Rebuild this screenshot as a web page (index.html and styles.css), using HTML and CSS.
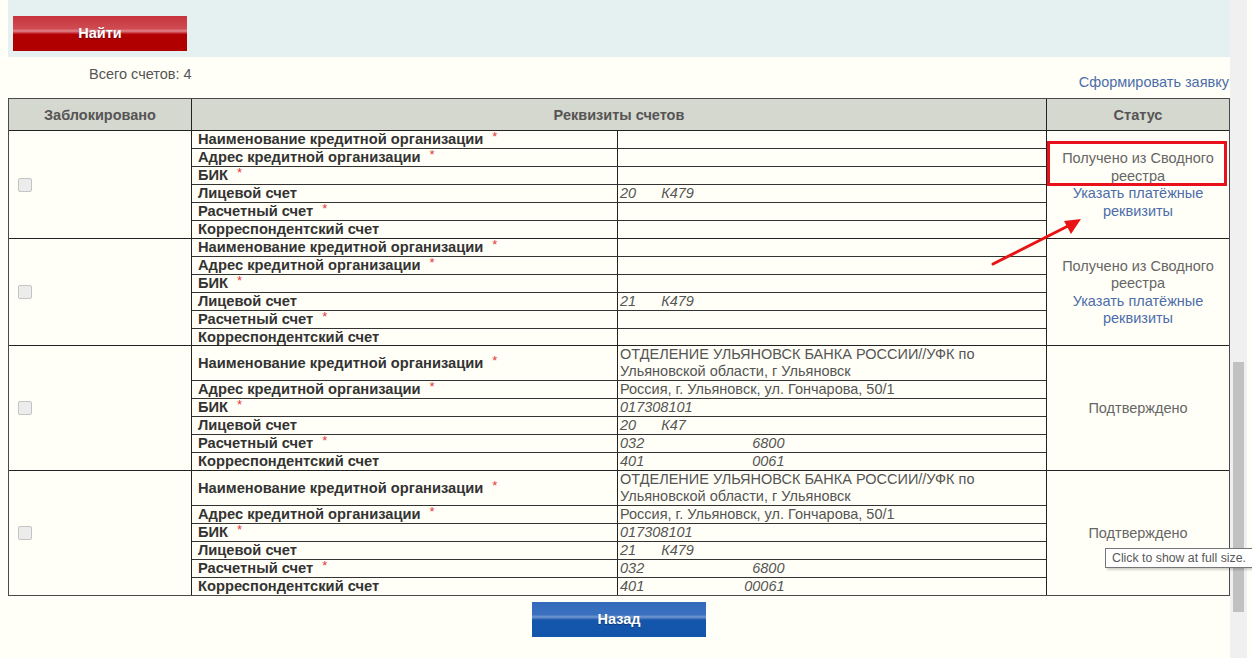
FILE: index.html
```html
<!DOCTYPE html>
<html lang="ru">
<head>
<meta charset="utf-8">
<title>Реквизиты счетов</title>
<link rel="stylesheet" href="styles.css">
</head>
<body>
<div class="screen">
  <main class="page">
    <div class="search-panel">
      <button class="btn btn-red" type="button">Найти</button>
    </div>
    <div class="summary">
      <span class="total">Всего счетов: 4</span>
      <a class="link request" href="#">Сформировать заявку</a>
    </div>

    <div class="tbl">
      <div class="thead">
        <div class="th">Заблокировано</div>
        <div class="th">Реквизиты счетов</div>
        <div class="th">Статус</div>
      </div>

      <div class="block">
        <div class="cb-cell"><span class="cb"></span></div>
        <div class="details">
          <div class="row"><div class="lbl">Наименование кредитной организации<span class="req">*</span></div><div class="val"></div></div>
          <div class="row"><div class="lbl">Адрес кредитной организации<span class="req">*</span></div><div class="val"></div></div>
          <div class="row"><div class="lbl">БИК<span class="req">*</span></div><div class="val"></div></div>
          <div class="row"><div class="lbl">Лицевой счет</div><div class="val it">20<span class="g1">К479</span></div></div>
          <div class="row"><div class="lbl">Расчетный счет<span class="req">*</span></div><div class="val"></div></div>
          <div class="row"><div class="lbl">Корреспондентский счет</div><div class="val"></div></div>
        </div>
        <div class="status">
          <span class="st">Получено из Сводного реестра</span>
          <a class="link" href="#">Указать платёжные реквизиты</a>
        </div>
      </div>

      <div class="block short">
        <div class="cb-cell"><span class="cb"></span></div>
        <div class="details">
          <div class="row"><div class="lbl">Наименование кредитной организации<span class="req">*</span></div><div class="val"></div></div>
          <div class="row"><div class="lbl">Адрес кредитной организации<span class="req">*</span></div><div class="val"></div></div>
          <div class="row"><div class="lbl">БИК<span class="req">*</span></div><div class="val"></div></div>
          <div class="row"><div class="lbl">Лицевой счет</div><div class="val it">21<span class="g1">К479</span></div></div>
          <div class="row"><div class="lbl">Расчетный счет<span class="req">*</span></div><div class="val"></div></div>
          <div class="row"><div class="lbl">Корреспондентский счет</div><div class="val"></div></div>
        </div>
        <div class="status">
          <span class="st">Получено из Сводного реестра</span>
          <a class="link" href="#">Указать платёжные реквизиты</a>
        </div>
      </div>

      <div class="block">
        <div class="cb-cell"><span class="cb"></span></div>
        <div class="details">
          <div class="row tall"><div class="lbl">Наименование кредитной организации<span class="req">*</span></div><div class="val">ОТДЕЛЕНИЕ УЛЬЯНОВСК БАНКА РОССИИ//УФК по Ульяновской области, г Ульяновск</div></div>
          <div class="row"><div class="lbl">Адрес кредитной организации<span class="req">*</span></div><div class="val">Россия, г. Ульяновск, ул. Гончарова, 50/1</div></div>
          <div class="row"><div class="lbl">БИК<span class="req">*</span></div><div class="val it">017308101</div></div>
          <div class="row"><div class="lbl">Лицевой счет</div><div class="val it">20<span class="g1">К47</span></div></div>
          <div class="row"><div class="lbl">Расчетный счет<span class="req">*</span></div><div class="val it">032<span class="g2">6800</span></div></div>
          <div class="row"><div class="lbl">Корреспондентский счет</div><div class="val it">401<span class="g2">0061</span></div></div>
        </div>
        <div class="status">
          <span class="st">Подтверждено</span>
        </div>
      </div>

      <div class="block">
        <div class="cb-cell"><span class="cb"></span></div>
        <div class="details">
          <div class="row tall"><div class="lbl">Наименование кредитной организации<span class="req">*</span></div><div class="val">ОТДЕЛЕНИЕ УЛЬЯНОВСК БАНКА РОССИИ//УФК по Ульяновской области, г Ульяновск</div></div>
          <div class="row"><div class="lbl">Адрес кредитной организации<span class="req">*</span></div><div class="val">Россия, г. Ульяновск, ул. Гончарова, 50/1</div></div>
          <div class="row"><div class="lbl">БИК<span class="req">*</span></div><div class="val it">017308101</div></div>
          <div class="row"><div class="lbl">Лицевой счет</div><div class="val it">21<span class="g1">К479</span></div></div>
          <div class="row"><div class="lbl">Расчетный счет<span class="req">*</span></div><div class="val it">032<span class="g2">6800</span></div></div>
          <div class="row"><div class="lbl">Корреспондентский счет</div><div class="val it">401<span class="g3">00061</span></div></div>
        </div>
        <div class="status">
          <span class="st">Подтверждено</span>
        </div>
      </div>
    </div>

    <div class="actions">
      <button class="btn btn-blue" type="button">Назад</button>
    </div>
  </main>

  <div class="scrollbar"><div class="thumb"></div></div>

  <div class="mark-box"></div>
  <svg class="arrow" width="100" height="52" viewBox="0 0 100 52">
    <line x1="3" y1="48" x2="80" y2="9" stroke="#e81414" stroke-width="3" stroke-linecap="round"/>
    <polygon points="91,3 74,5 81,18" fill="#e81414"/>
  </svg>
  <div class="tooltip">Click to show at full size.</div>
</div>
</body>
</html>
```

FILE: styles.css
```css
html, body {
  margin: 0;
  padding: 0;
  overflow: hidden;
  background: #fffff7;
}

.screen {
  position: relative;
  display: flex;
  width: 1252px;
  height: 658px;
  font-family: "Liberation Sans", Arial, sans-serif;
  font-size: 14.5px;
  color: #555;
}

.page {
  width: 1230px;
  padding-left: 8px;
  box-sizing: border-box;
  background: #fffff7;
}

.search-panel {
  height: 57px;
  width: 1222px;
  background: #e5f1f1;
  padding: 16px 0 0 5px;
  box-sizing: border-box;
}

.btn {
  display: block;
  width: 174px;
  height: 35px;
  border: 0;
  padding: 0 0 2px;
  font-family: "Liberation Sans", Arial, sans-serif;
  font-size: 14.5px;
  font-weight: bold;
  color: #fff;
  text-shadow: 0 1px 1px rgba(0, 0, 0, 0.35);
  cursor: pointer;
}

.btn-red {
  background: linear-gradient(#c8343c 0%, #cf4b52 36%, #e2858a 43%, #c32a31 49%, #b20000 53%, #b00000 100%);
}

.btn-blue {
  background: linear-gradient(#3369b9 0%, #3a71bf 36%, #7399d2 43%, #2b62b3 49%, #1556ad 53%, #1455ac 100%);
}

.summary {
  height: 41px;
  width: 1222px;
  display: flex;
  justify-content: space-between;
}

.total {
  margin: 9px 0 0 81px;
  line-height: 17px;
}

.link {
  color: #4c6daa;
  text-decoration: none;
}

.request {
  margin-top: 17px;
  margin-right: 1px;
  line-height: 17px;
  height: 17px;
}

.tbl {
  width: 1222px;
  border: 1px solid #4a4a4a;
  box-sizing: border-box;
}

.thead {
  display: grid;
  grid-template-columns: 183px 855px 182px;
  height: 32px;
  background: #d5d8cf;
  border-bottom: 1px solid #222;
  box-sizing: border-box;
}

.th {
  display: flex;
  align-items: center;
  justify-content: center;
  font-weight: bold;
  color: #555;
}

.th:nth-child(1),
.th:nth-child(2) {
  border-right: 1px solid #222;
}

.block {
  display: grid;
  grid-template-columns: 183px 855px 182px;
  border-bottom: 1px solid #222;
}

.block:last-child {
  border-bottom: 0;
}

.cb-cell {
  border-right: 1px solid #222;
  display: flex;
  align-items: center;
  padding-left: 9px;
}

.cb {
  width: 12px;
  height: 12px;
  border: 1px solid #c4c4c4;
  border-radius: 2px;
  background: #ececec;
}

.details {
  border-right: 1px solid #222;
}

.row {
  display: flex;
  height: 18px;
  border-bottom: 1px solid #333;
  box-sizing: border-box;
  line-height: 17px;
}

.row:last-child {
  border-bottom: 0;
  height: 17px;
}

.block.short .row:last-child {
  height: 16px;
}

.row.tall {
  height: 35px;
}

.lbl {
  width: 426px;
  flex: none;
  border-right: 1px solid #222;
  padding-left: 6px;
  box-sizing: border-box;
  font-weight: bold;
  font-size: 14.7px;
  color: #333;
  white-space: nowrap;
}

.row.tall .lbl {
  line-height: 34px;
}

.req {
  color: #e23a3a;
  font-weight: normal;
  font-size: 13px;
  margin-left: 9px;
  line-height: 0;
  vertical-align: 3px;
}

.val {
  flex: 1;
  padding-left: 2px;
  color: #555;
  white-space: nowrap;
  overflow: hidden;
}

.row.tall .val {
  white-space: normal;
  line-height: 17px;
}

.it {
  font-style: italic;
}

.g1 { margin-left: 25px; }
.g2 { margin-left: 108px; }
.g3 { margin-left: 100px; }

.status {
  display: flex;
  flex-direction: column;
  align-items: center;
  justify-content: center;
  text-align: center;
  line-height: 17.5px;
  padding: 1px 10px 0;
}

.st {
  color: #666;
}

.actions {
  width: 1222px;
  display: flex;
  justify-content: center;
  padding-top: 6px;
}

.scrollbar {
  width: 22px;
  height: 658px;
  background: #f0f0f0;
  border-right: 5px solid #fffff7;
  box-sizing: border-box;
  padding: 362px 0 0 3px;
}

.thumb {
  width: 11px;
  height: 250px;
  background: #c1c1c1;
}

.mark-box {
  position: absolute;
  left: 1047px;
  top: 141px;
  width: 180px;
  height: 45px;
  border: 3px solid #e8101a;
  box-sizing: border-box;
}

.arrow {
  position: absolute;
  left: 990px;
  top: 216px;
}

.tooltip {
  position: absolute;
  left: 1105px;
  top: 548px;
  height: 20px;
  padding: 0 8px 0 6px;
  border: 1px solid #767676;
  background: #fff;
  box-shadow: 2px 2px 2px rgba(0, 0, 0, 0.18);
  box-sizing: border-box;
  font-size: 12.3px;
  line-height: 18px;
  color: #575757;
  white-space: nowrap;
}
```
